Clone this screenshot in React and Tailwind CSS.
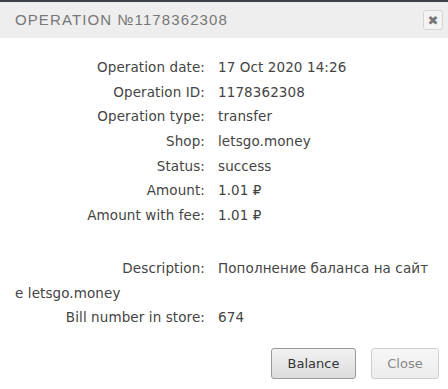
import React from 'react';

const rows = [
  ['Operation date:', '17 Oct 2020 14:26'],
  ['Operation ID:', '1178362308'],
  ['Operation type:', 'transfer'],
  ['Shop:', 'letsgo.money'],
  ['Status:', 'success'],
  ['Amount:', '1.01 ₽'],
  ['Amount with fee:', '1.01 ₽'],
];

function Row({ label, value }) {
  return (
    <div className="flex h-[24.6px] items-center">
      <div className="w-[190px] shrink-0 text-right">{label}</div>
      <div className="ml-[13px]">{value}</div>
    </div>
  );
}

export default function App() {
  return (
    <div className="w-[448px] h-[389px] bg-white border-t-2 border-[#3b4148] font-['DejaVu_Sans',sans-serif] text-[#444]">
      {/* header */}
      <div className="flex h-[36px] items-center justify-between bg-[#eeeeee] pl-[15px] pr-[5px]">
        <h1 className="font-['Liberation_Sans',sans-serif] text-[15px] tracking-[1.1px] text-[#777]">
          OPERATION №1178362308
        </h1>
        <button className="flex h-[20px] w-[20px] items-center justify-center rounded-[3px] border border-[#d5d5d5] bg-[#f3f3f3] text-[13px] font-bold leading-none text-[#777]">
          ✖
        </button>
      </div>

      {/* body */}
      <div className="px-[15px] pt-[17px] text-[13.5px] tracking-[0.1px]">
        {rows.map(([l, v]) => (
          <Row key={l} label={l} value={v} />
        ))}
        <div className="h-[29px]" />
        <Row label="Description:" value="Пополнение баланса на сайт" />
        <div className="flex h-[24px] items-center">e letsgo.money</div>
        <Row label="Bill number in store:" value="674" />
      </div>

      {/* footer */}
      <div className="mt-[19px] flex justify-end gap-[15px] pr-[9px] font-['DejaVu_Sans',sans-serif] text-[13px]">
        <button className="h-[31px] w-[85px] rounded-[3px] border border-[#999] bg-gradient-to-b from-[#f2f2f2] to-[#dcdcdc] text-[#333]">
          Balance
        </button>
        <button className="h-[31px] w-[68px] rounded-[3px] border border-[#cfcfcf] bg-gradient-to-b from-[#f7f7f7] to-[#ececec] text-[#888]">
          Close
        </button>
      </div>
    </div>
  );
}
